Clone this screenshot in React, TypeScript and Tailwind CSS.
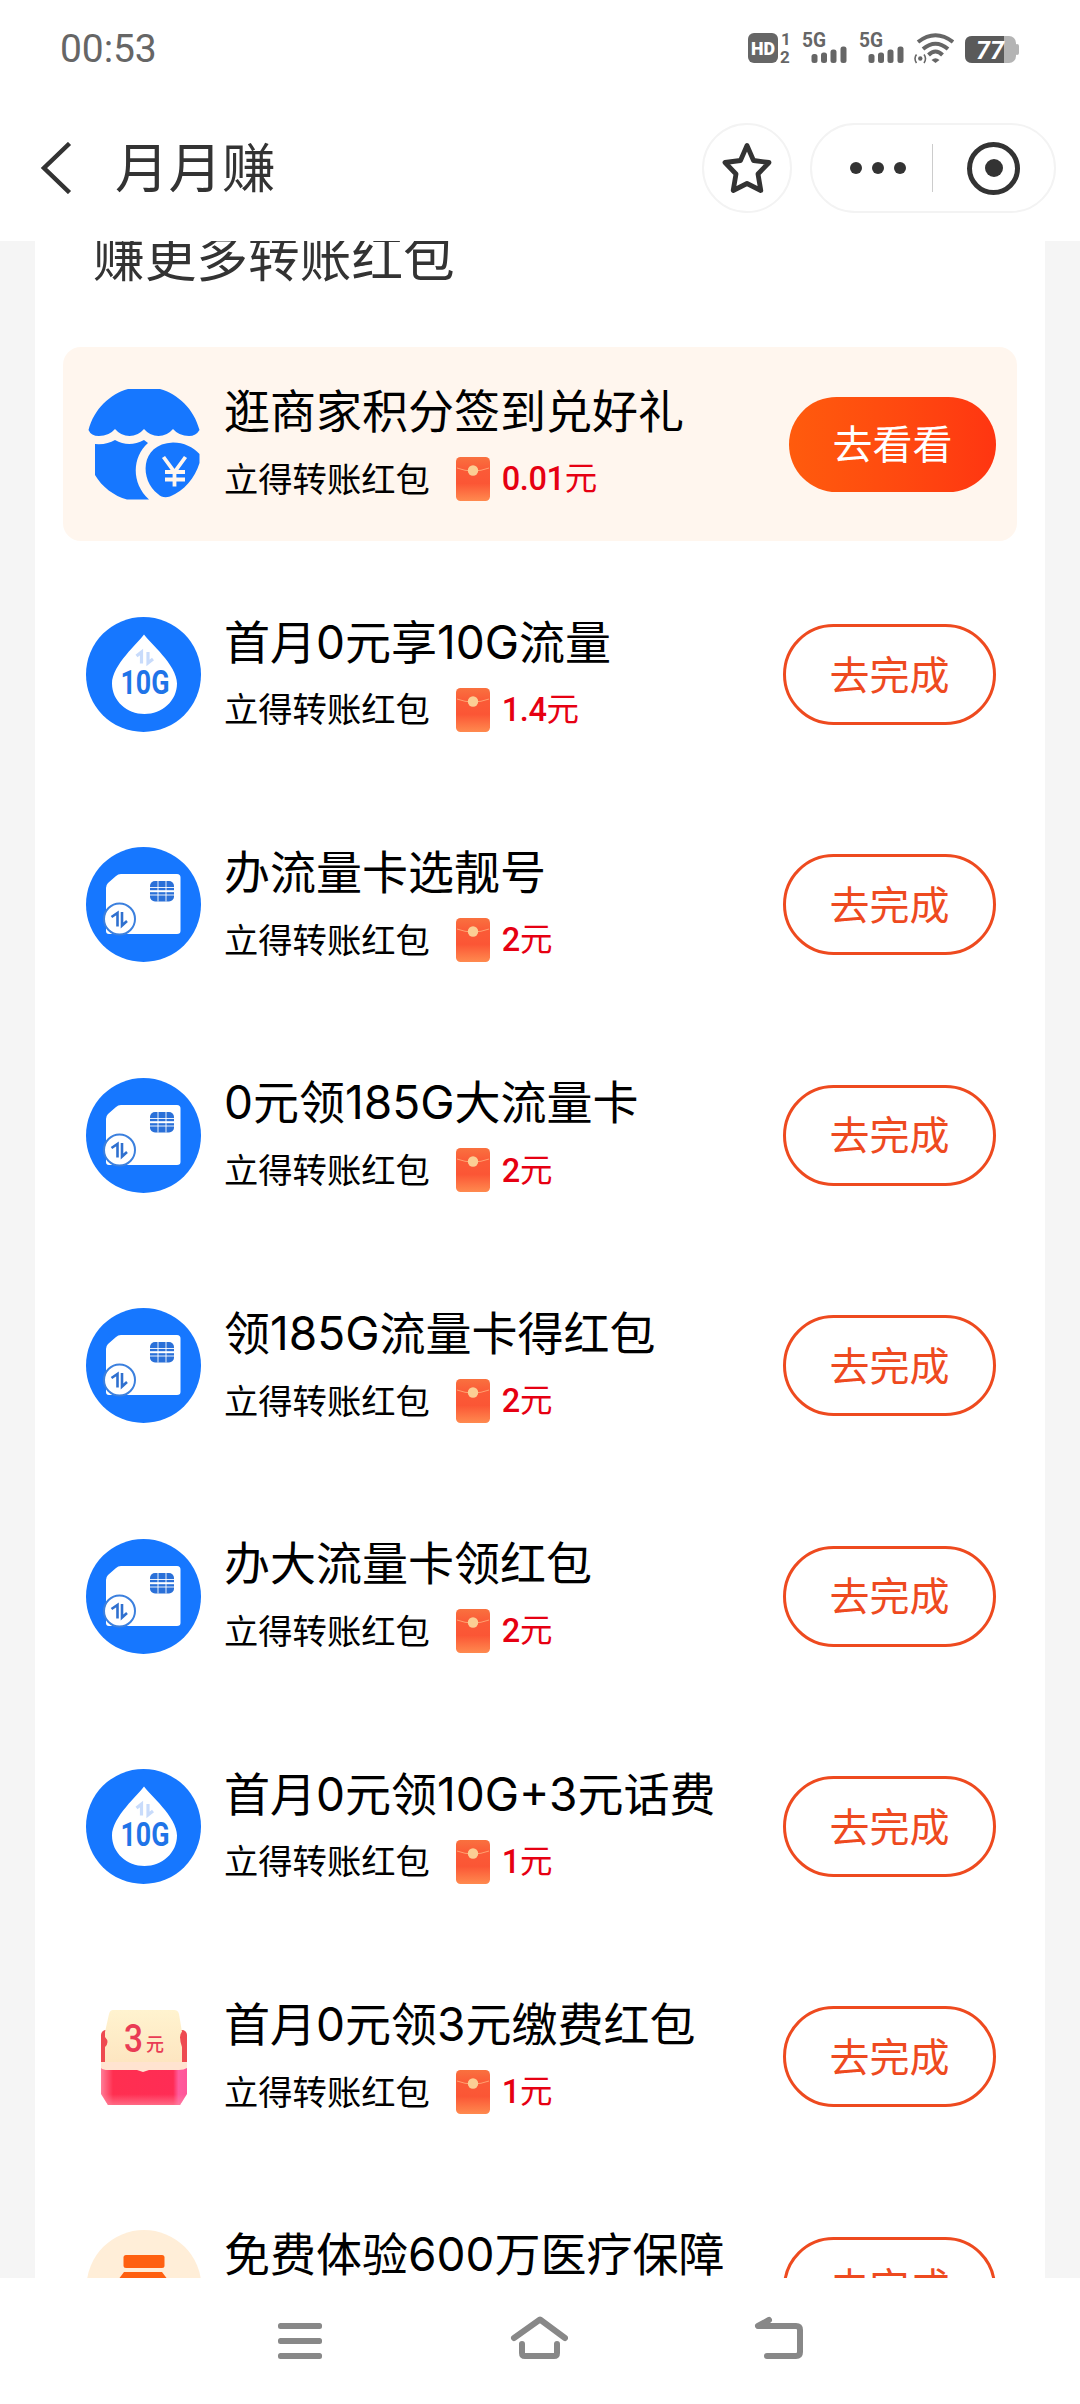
import React from 'react';

type IconKind = 'shop' | 'data' | 'sim' | 'coupon' | 'bottle';

interface Task {
  title: string;
  amount: string;
  icon: IconKind;
  highlight?: boolean;
}

const TASKS: Task[] = [
  { title: '逛商家积分签到兑好礼', amount: '0.01', icon: 'shop', highlight: true },
  { title: '首月0元享10G流量', amount: '1.4', icon: 'data' },
  { title: '办流量卡选靓号', amount: '2', icon: 'sim' },
  { title: '0元领185G大流量卡', amount: '2', icon: 'sim' },
  { title: '领185G流量卡得红包', amount: '2', icon: 'sim' },
  { title: '办大流量卡领红包', amount: '2', icon: 'sim' },
  { title: '首月0元领10G+3元话费', amount: '1', icon: 'data' },
  { title: '首月0元领3元缴费红包', amount: '1', icon: 'coupon' },
  { title: '免费体验600万医疗保障', amount: '1', icon: 'bottle' },
];

const ShopIcon = () => (
  <svg viewBox="0 0 115 115" className="size-[115px] shrink-0">
    <g fill="#1677ff">
      <path d="M42 2H74C92 7 108 22 113.500 43Q110 49 103 49Q93 49 87 42Q81 49 72.500 49Q64 49 58 42Q52 49 43.500 49Q35 49 29 42Q23 49 13 49Q5 49 2.500 43C8 22 24 7 42 2Z" />
      <path d="M9 57Q21 58 29 53Q43 61 58 53L62 56C46 70 45 96 63 112.500H41C28 109 16 100 9 88Z" />
      <path d="M87 55.500C98 55.500 107 60 113.500 67V76C109 91 98 104 84 109.500Q77 112 72 107C54 94 53 57 87 55.500Z" />
    </g>
    <path d="M77.500 70L88.500 85L99.500 70M88.500 85V99.500M79 85H99M79 92.500H99" fill="none" stroke="#fff6ee" strokeWidth="3.800" />
  </svg>
);

const DataIcon = () => (
  <svg viewBox="0 0 115 115" className="size-[115px] shrink-0">
    <circle cx="57.500" cy="57.500" r="57.500" fill="#1677ff" />
    <path d="M58 17.500C63 25 91 48 91 66.500C91 84 76 97 58.500 97S26 84 26 66.500C26 48 53 25 58 17.500Z" fill="#fff" />
    <path d="M50.500 39L55.500 35V46.500M62 35V46L67 42" fill="none" stroke="#c8dbfb" strokeWidth="3.200" />
    <text x="59" y="77" textAnchor="middle" textLength="49" lengthAdjust="spacingAndGlyphs" fill="#1f74e8" className="font-['Roboto'] text-[34px] font-bold">10G</text>
  </svg>
);

const SimIcon = () => (
  <svg viewBox="0 0 115 115" className="size-[115px] shrink-0">
    <circle cx="57.500" cy="57.500" r="57.500" fill="#1677ff" />
    <path d="M35 27H91Q94.500 27 94.500 30.500V84Q94.500 87 91 87H23Q20 87 20 84V41Q20 38 22 36L30 29Q32 27 35 27Z" fill="#fff" />
    <rect x="64" y="34" width="24" height="20.500" rx="5" fill="#2a70d8" />
    <path d="M72 34V54.500M80 34V54.500M64 40.500H88M64 48H88" stroke="#fff" strokeWidth="0.900" />
    <path d="M64 44.200H88" stroke="#fff" strokeWidth="2" />
    <circle cx="33.500" cy="72" r="15.500" fill="#fff" stroke="#3c80de" strokeWidth="2" />
    <path d="M25.500 70L31.500 66V79.500M36 65V78.500L41 74" fill="none" stroke="#2f70cf" strokeWidth="2.600" />
  </svg>
);

const CouponIcon = () => (
  <svg viewBox="0 0 115 115" className="size-[115px] shrink-0">
    <defs>
      <linearGradient id="ticket" x1="0" y1="0" x2="0" y2="1">
        <stop offset="0" stopColor="#fff3cf" />
        <stop offset="1" stopColor="#fde5c0" />
      </linearGradient>
      <linearGradient id="pocket" x1="0" y1="0" x2="1" y2="0">
        <stop offset="0" stopColor="#ff7d98" />
        <stop offset="0.140" stopColor="#ff2f50" />
        <stop offset="0.840" stopColor="#ff2c55" />
        <stop offset="0.900" stopColor="#ff5a9c" />
        <stop offset="1" stopColor="#ff5599" />
      </linearGradient>
      <linearGradient id="pocketFade" x1="0" y1="0" x2="0" y2="1">
        <stop offset="0.750" stopColor="#ff8aa0" stopOpacity="0" />
        <stop offset="1" stopColor="#ff8aa0" stopOpacity="0.650" />
      </linearGradient>
    </defs>
    <rect x="15" y="31" width="86" height="42" rx="5" fill="#ee4a50" />
    <path d="M27 11H88Q92 11 93 15L96 33Q92 36 96 48V65H19V48Q24 43 19 38V33L23 15Q24 11 27 11Z" fill="url(#ticket)" />
    <path d="M15 63H101V95L94 106H22L15 95Z" fill="url(#pocket)" />
    <path d="M15 63H101V95L94 106H22L15 95Z" fill="url(#pocketFade)" />
    <path d="M15 63H101V69Q98 71 93 71H63L57 73L51 71H22Q17 71 15 69Z" fill="#ffe3d0" />
    <text x="38" y="52.500" textLength="19" lengthAdjust="spacingAndGlyphs" fill="#e93c55" className="font-['Roboto'] text-[38px] font-medium">3</text>
    <text x="60" y="52" fill="#e93c55" className="font-['Noto_Sans_CJK_SC',sans-serif] text-[18px] font-medium">元</text>
  </svg>
);

const BottleIcon = () => (
  <svg viewBox="0 0 115 115" className="size-[115px] shrink-0">
    <circle cx="58" cy="57.500" r="57.500" fill="#ffeed8" />
    <rect x="37.500" y="25" width="41" height="13" rx="2.500" fill="#ff6010" />
    <path d="M38 42H76L82 50V92H32V50Z" fill="#ff6010" />
  </svg>
);

const ICONS: Record<IconKind, React.FC> = {
  shop: ShopIcon,
  data: DataIcon,
  sim: SimIcon,
  coupon: CouponIcon,
  bottle: BottleIcon,
};

const Envelope = () => (
  <svg viewBox="0 0 34 44" className="h-11 w-[34px] shrink-0">
    <defs>
      <linearGradient id="envelope" x1="0" y1="0" x2="0" y2="1">
        <stop offset="0" stopColor="#f9713f" />
        <stop offset="0.300" stopColor="#fb5a37" />
        <stop offset="0.600" stopColor="#fb5635" />
        <stop offset="1" stopColor="#ff8a4f" />
      </linearGradient>
    </defs>
    <rect width="34" height="44" rx="4.500" fill="url(#envelope)" />
    <path d="M1 11Q17 17 33 11" fill="none" stroke="#ffa070" strokeWidth="1" />
    <circle cx="17" cy="13.500" r="5.200" fill="#fbcf94" />
  </svg>
);

const Signal = () => (
  <svg viewBox="0 0 46 32" className="h-8 w-[46px] overflow-visible" fill="#666">
    <text x="0" y="15" textLength="24" lengthAdjust="spacingAndGlyphs" className="font-['Roboto'] text-[19.500px] font-bold">5G</text>
    <rect x="9.500" y="22" width="6" height="9" rx="2.500" />
    <rect x="19" y="20.500" width="6" height="10.500" rx="2.500" />
    <rect x="28.500" y="17.500" width="6" height="13.500" rx="2.500" />
    <rect x="38.500" y="14.500" width="6" height="16.500" rx="2.500" />
  </svg>
);

const StatusBar = () => (
  <div className="flex h-24 items-center justify-between pr-[60px] pl-[60px]">
    <span className="mt-[2px] font-['Roboto',sans-serif] text-[39px] leading-none tracking-[-0.100px] text-[#666]">00:53</span>
    <div className="flex items-center">
      <svg viewBox="0 0 44 32" className="h-8 w-11 overflow-visible" fill="#666">
        <rect x="0" y="1" width="30" height="30" rx="6" />
        <text x="3" y="23" textLength="24" lengthAdjust="spacingAndGlyphs" fill="#fff" className="font-['Roboto'] text-[19px] font-black">HD</text>
        <text x="33" y="13" className="font-['Roboto'] text-[17px] font-bold">1</text>
        <text x="32" y="31" className="font-['Roboto'] text-[17px] font-bold">2</text>
      </svg>
      <div className="ml-[10px] flex gap-[11px]">
        <Signal />
        <Signal />
      </div>
      <svg viewBox="0 0 40 32" className="ml-[9px] h-8 w-10" fill="none" stroke="#666">
        <path d="M4 10Q21.500-3.500 39 10" strokeWidth="4" />
        <path d="M9 17Q21.500 6.500 34 17" strokeWidth="4" />
        <path d="M14.500 23Q21.500 16 28.500 23" strokeWidth="4" />
        <path d="M17.500 28Q21.500 24.500 25.500 28L21.500 31Z" fill="#666" stroke="none" />
        <path d="M2.500 22.500Q-0.500 26.500 2.500 31M10 22.500Q13 26.500 10 31" strokeWidth="1.600" />
        <circle cx="6.300" cy="26.500" r="2.200" fill="#666" stroke="none" />
      </svg>
      <svg viewBox="0 0 55 32" className="ml-[11px] h-8 w-[55px] overflow-visible">
        <rect x="50" y="12" width="4" height="11" rx="2" fill="#b4b4b4" />
        <rect x="0" y="4" width="51" height="27" rx="7" fill="#b4b4b4" />
        <path d="M7 4H39V31H7Q0 31 0 24V11Q0 4 7 4Z" fill="#5a5a5a" />
        <text x="11" y="26.500" textLength="28" lengthAdjust="spacingAndGlyphs" fill="#fff" className="font-['Roboto'] text-[25px] font-bold italic">77</text>
      </svg>
    </div>
  </div>
);

const Header = () => (
  <div className="flex h-[145px] items-center pr-6 pb-[1px] pl-[40px]">
    <svg viewBox="0 0 32 52" className="h-[52px] w-8" fill="none" stroke="#333" strokeWidth="4.500">
      <path d="M29.500 1.500L4 26L29.500 50.500" />
    </svg>
    <h1 className="mb-[6px] ml-[43px] text-[53.500px] leading-none text-[#333]">月月赚</h1>
    <div className="ml-auto flex size-[90px] items-center justify-center rounded-full border-2 border-[#f3f3f3]">
      <svg viewBox="0 0 50 52" className="h-[52px] w-[50px]" fill="none" stroke="#333" strokeWidth="4.800" strokeLinejoin="round">
        <path d="M25 3.500L31.500 18.500L47 20.500L36 32L38.800 48.500L25 41.500L11.200 48.500L14 32L3 20.500L18.500 18.500Z" />
      </svg>
    </div>
    <div className="ml-[18px] flex h-[90px] w-[246px] items-center rounded-full border-2 border-[#f3f3f3]">
      <div className="flex w-[120px] justify-center gap-[10.500px] pl-[12px]">
        <span className="size-[11.600px] rounded-full bg-[#333]" />
        <span className="size-[11.600px] rounded-full bg-[#333]" />
        <span className="size-[11.600px] rounded-full bg-[#333]" />
      </div>
      <div className="h-12 w-px bg-[#ccc]" />
      <div className="ml-[34px] flex size-[53px] items-center justify-center rounded-full border-[5.500px] border-[#333]">
        <span className="size-[18px] rounded-full bg-[#333]" />
      </div>
    </div>
  </div>
);

const TaskRow: React.FC<{ task: Task }> = ({ task }) => {
  const Icon = ICONS[task.icon];
  return (
    <li className="flex h-[230.400px] shrink-0 items-center px-7">
      <div className={`flex h-[194px] flex-1 items-center rounded-[18px] pr-[21px] pl-[23px] ${task.highlight ? 'bg-[#fff6ee]' : ''}`}>
        <Icon />
        <div className="ml-[23px] flex flex-1 flex-col whitespace-nowrap text-black">
          <p className="h-[66px] font-['Inter','Noto_Sans_CJK_SC',sans-serif] text-[46px] leading-[67px]">{task.title}</p>
          <div className="flex h-[66px] items-center">
            <span className="text-[34.300px] leading-none">立得转账红包</span>
            <span className="mt-[4px] ml-[26px] flex items-center gap-[12px] font-['Roboto','Noto_Sans_CJK_SC',sans-serif] text-[32.500px] leading-none text-[#e60012]">
              <Envelope />
              <span className="pt-px">
                <span className="font-medium tracking-[-0.400px]">{task.amount}</span>元
              </span>
            </span>
          </div>
        </div>
        {task.highlight ? (
          <button className="h-[95px] w-[207px] rounded-full bg-linear-to-r from-[#ff5b0d] to-[#ff3511] pb-[4px] text-[40px] leading-none text-white">去看看</button>
        ) : (
          <button className="h-[101px] w-[213px] rounded-full border-3 border-[#ee4a1f] pb-[4px] text-[40px] leading-none text-[#ee4a1f]">去完成</button>
        )}
      </div>
    </li>
  );
};

const NavBar = () => (
  <div className="flex h-[126px] items-start justify-between bg-white px-[276px] pt-[36px]">
    <svg viewBox="0 0 48 48" className="size-12" fill="#888">
      <rect x="2" y="9" width="44" height="6" rx="2.500" />
      <rect x="2" y="24" width="44" height="6" rx="2.500" />
      <rect x="2" y="39" width="44" height="6" rx="2.500" />
    </svg>
    <svg viewBox="0 0 60 48" className="h-12 w-[60px]" fill="none" stroke="#888" strokeWidth="6" strokeLinecap="round" strokeLinejoin="round">
      <path d="M6 24L32 5.500L57 24" />
      <path d="M14 30V39Q14 42 17 42H46Q49 42 49 39V30" />
    </svg>
    <svg viewBox="0 0 52 48" className="h-12 w-[52px]" fill="none" stroke="#888" strokeWidth="6" strokeLinecap="round" strokeLinejoin="round">
      <path d="M17 6L6 12H44Q48 12 48 16V38Q48 42 44 42H15" />
    </svg>
  </div>
);

const App: React.FC = () => {
  return (
    <div className="flex h-[2404px] w-[1080px] flex-col overflow-hidden bg-white font-['Noto_Sans_CJK_SC',sans-serif]">
      <StatusBar />
      <Header />
      <main className="h-[2037px] overflow-hidden bg-[#f5f5f5] px-[35px]">
        <section className="flex h-full flex-col overflow-hidden bg-white">
          <h2 className="-mt-[16px] h-[104px] shrink-0 pl-[58px] text-[51.700px] leading-[60px] text-[#333]">赚更多转账红包</h2>
          <ul className="flex flex-col">
            {TASKS.map((task) => (
              <TaskRow key={task.title} task={task} />
            ))}
          </ul>
        </section>
      </main>
      <NavBar />
    </div>
  );
};

export default App;
